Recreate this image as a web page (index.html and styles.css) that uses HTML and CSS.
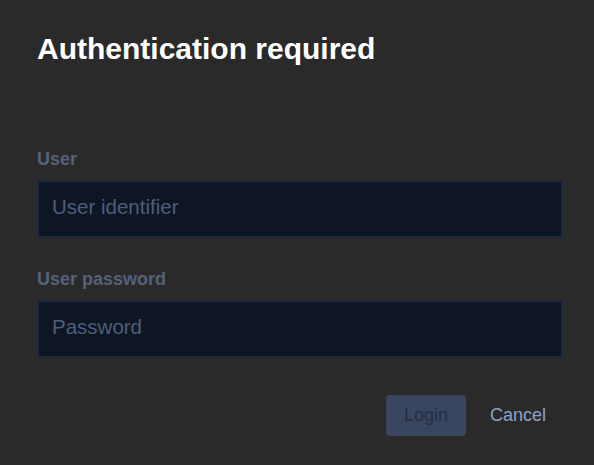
FILE: index.html
```html
<!DOCTYPE html>
<html>
<head>
<meta charset="utf-8">
<link rel="stylesheet" href="styles.css">
</head>
<body>
<div class="dialog">
  <h1 class="title">Authentication required</h1>
  <form class="form">
    <label class="field">
      <span class="label">User</span>
      <input class="input" type="text" placeholder="User identifier">
    </label>
    <label class="field">
      <span class="label">User password</span>
      <input class="input" type="password" placeholder="Password">
    </label>
    <div class="actions">
      <button type="button" class="btn btn-login" disabled>Login</button>
      <button type="button" class="btn btn-cancel">Cancel</button>
    </div>
  </form>
</div>
</body>
</html>
```
FILE: styles.css
```css
html, body {
  margin: 0;
  padding: 0;
  background: #2a2a2a;
  font-family: "Liberation Sans", Arial, sans-serif;
}
.dialog {
  padding: 31px 32px 0 37px;
}
.title {
  margin: 0;
  font-size: 30px;
  font-weight: bold;
  color: #ffffff;
  line-height: 36px;
}
.form {
  margin-top: 82px;
  display: flex;
  flex-direction: column;
}
.field {
  display: flex;
  flex-direction: column;
  margin-bottom: 31px;
}
.label {
  font-size: 18px;
  font-weight: bold;
  color: #56617a;
  line-height: 20px;
  margin-bottom: 11px;
}
.input {
  box-sizing: border-box;
  width: 526px;
  height: 58px;
  background: #0f1623;
  border: 2px solid #1c2840;
  outline: none;
  padding: 0 13px 4px;
  font-family: "Liberation Sans", Arial, sans-serif;
  font-size: 20.5px;
  color: #c0c8d8;
}
.input::placeholder {
  color: #4e5d7b;
}
.actions {
  display: flex;
  justify-content: flex-end;
  align-items: center;
  gap: 8px;
  margin-top: 6px;
}
.btn {
  font-family: "Liberation Sans", Arial, sans-serif;
  font-size: 18px;
  border: none;
  border-radius: 4px;
  height: 41px;
  cursor: pointer;
}
.btn-login {
  padding: 0 18px;
  background: #3a4560;
  color: #232e45;
}
.btn-cancel {
  padding: 0 16px;
  background: transparent;
  color: #8ca2c9;
}
```
